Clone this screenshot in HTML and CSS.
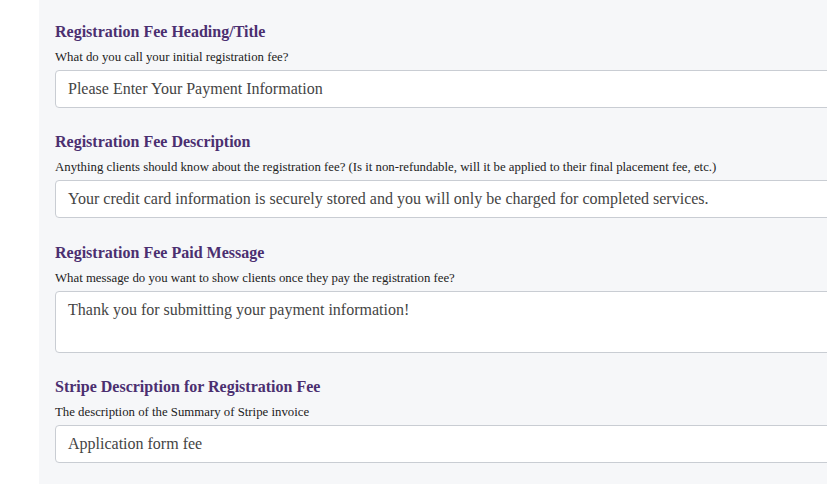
FILE: index.html
```html
<!DOCTYPE html>
<html>
<head>
<meta charset="utf-8">
<link rel="stylesheet" href="styles.css">
</head>
<body>
<div class="page">
  <div class="gutter"></div>
  <div class="panel">
    <div class="field">
      <h3 class="title">Registration Fee Heading/Title</h3>
      <p class="hint">What do you call your initial registration fee?</p>
      <div class="input">Please Enter Your Payment Information</div>
    </div>
    <div class="field field-wide">
      <h3 class="title">Registration Fee Description</h3>
      <p class="hint">Anything clients should know about the registration fee? (Is it non-refundable, will it be applied to their final placement fee, etc.)</p>
      <div class="input">Your credit card information is securely stored and you will only be charged for completed services.</div>
    </div>
    <div class="field">
      <h3 class="title">Registration Fee Paid Message</h3>
      <p class="hint">What message do you want to show clients once they pay the registration fee?</p>
      <div class="input textarea">Thank you for submitting your payment information!</div>
    </div>
    <div class="field">
      <h3 class="title">Stripe Description for Registration Fee</h3>
      <p class="hint">The description of the Summary of Stripe invoice</p>
      <div class="input">Application form fee</div>
    </div>
  </div>
</div>
</body>
</html>
```
FILE: styles.css
```css
html, body {
  margin: 0;
  padding: 0;
  background: #ffffff;
  overflow: hidden;
}
body {
  width: 827px;
  height: 484px;
  font-family: "Liberation Serif", "Times New Roman", serif;
}
.page {
  display: flex;
  height: 484px;
}
.gutter {
  width: 39px;
  flex: 0 0 39px;
  background: #ffffff;
}
.panel {
  flex: 0 0 900px;
  background: #f6f7f9;
  padding: 22px 0 0 16px;
  box-sizing: border-box;
}
.field {
  margin-bottom: 24px;
}
.field-wide {
  margin-bottom: 25px;
}
.title {
  margin: 0;
  font-size: 16px;
  line-height: 20px;
  font-weight: bold;
  color: #4b2f70;
}
.hint {
  margin: 8px 0 6px;
  font-size: 12.8px;
  line-height: 14px;
  color: #222222;
}
.input {
  box-sizing: border-box;
  width: 900px;
  height: 38px;
  background: #ffffff;
  border: 1px solid #c9cdd3;
  border-radius: 4px;
  padding: 8px 12px;
  font-size: 16px;
  line-height: 20px;
  color: #444444;
}
.input.textarea {
  height: 62px;
}
```
